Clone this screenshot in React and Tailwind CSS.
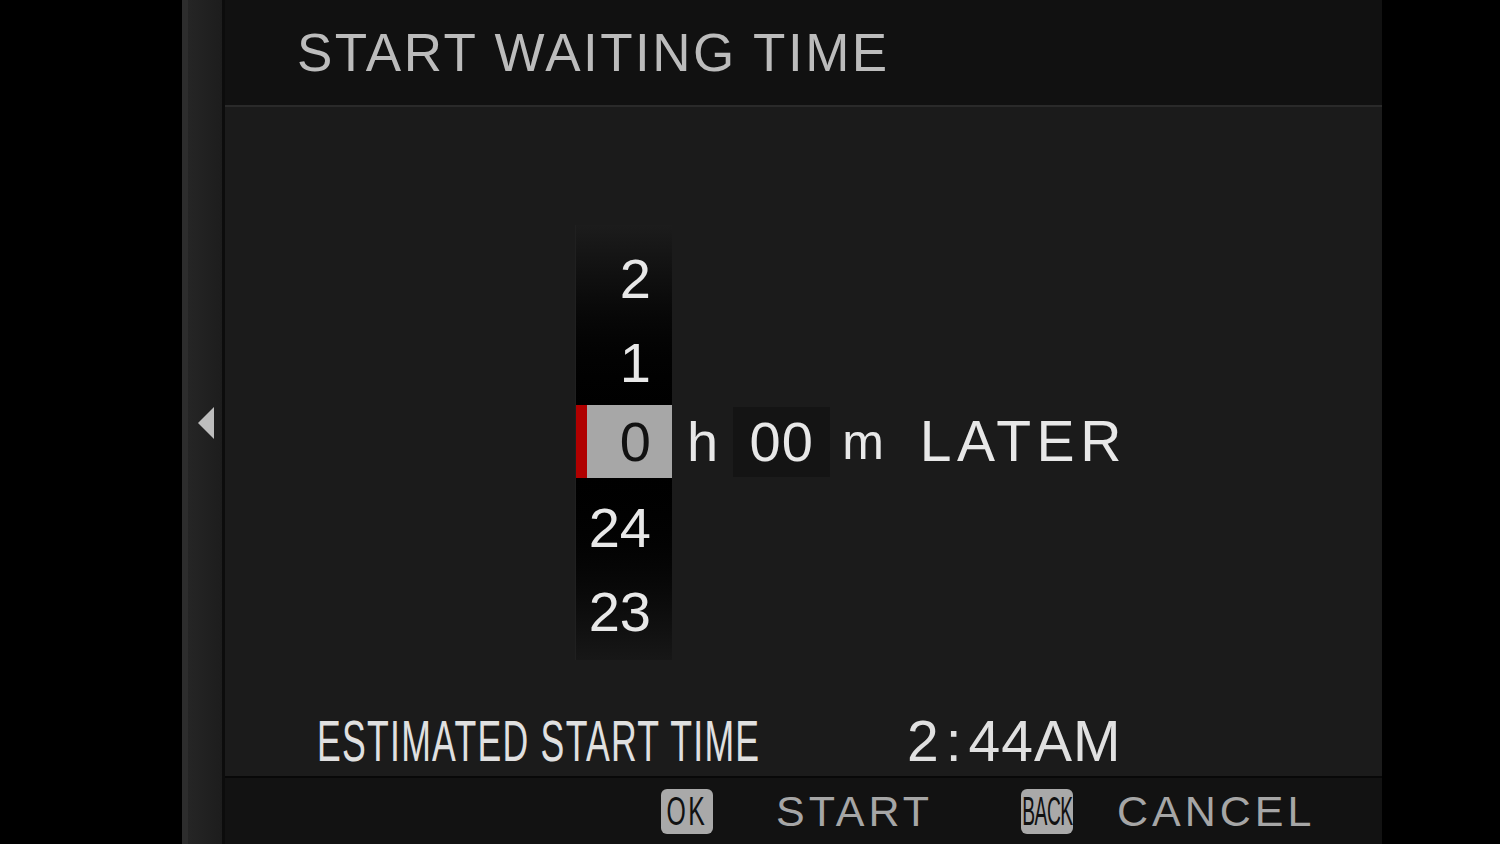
import React from "react";

const font = "font-['Liberation_Sans',Arial,sans-serif]";

// hour drum values, top to bottom
const above = ["2", "1"];
const below = ["24", "23"];

function DrumCell({ value }) {
  return (
    <div className="h-[84px] flex items-center justify-end pr-[21px] text-[56px] leading-none text-[#e8e8e8]">
      {value}
    </div>
  );
}

function Badge({ label, scale }) {
  return (
    <div className="w-[52px] h-[45px] rounded-[6px] bg-[#a9a9a9] flex items-center justify-center overflow-hidden">
      <span className={`inline-block text-[40px] leading-none text-[#111] ${scale}`}>{label}</span>
    </div>
  );
}

export default function App() {
  return (
    <div className={`flex w-full h-[844px] overflow-hidden bg-black ${font}`}>
      <div className="w-[182px] shrink-0 bg-black" />

      {/* left side strip with arrow */}
      <div className="w-[6px] shrink-0 bg-[#2d2d2d]" />
      <div className="w-[34px] shrink-0 bg-linear-to-r from-[#252525] to-[#1d1d1d] flex items-center pl-[10px]">
        <svg width="16" height="32" viewBox="0 0 16 32" className="mt-[2px]">
          <polygon points="16,0 16,32 0,16" fill="#bdbdbd" />
        </svg>
      </div>
      <div className="w-[3px] shrink-0 bg-[#0c0c0c]" />

      {/* main panel */}
      <div className="w-[1157px] shrink-0 flex flex-col">
        <div className="h-[105px] bg-[#111] flex items-center pl-[72px]">
          <span className="text-[53px] leading-none tracking-[2.5px] text-[#bcbcbc] whitespace-nowrap">START WAITING TIME</span>
        </div>
        <div className="h-[2px] bg-[#2a2a2a]" />

        <div className="flex-1 bg-[#1b1b1b] flex flex-col">
          <div className="flex items-start pl-[350px] mt-[118px]">
            {/* hour drum */}
            <div className="w-[97px] flex flex-col pt-[12px] pb-[6px] border-l border-[#202020] bg-linear-to-b from-[#1c1c1c] via-black to-[#171717]">
              {above.map((v) => (
                <DrumCell key={v} value={v} />
              ))}
              <div className="h-[73px] flex">
                <div className="w-[11px] bg-[#b00000]" />
                <div className="flex-1 bg-[#a7a7a7] flex items-center justify-end pr-[21px] text-[56px] leading-none text-[#111]">
                  0
                </div>
              </div>
              <div className="mt-[8px]">
                {below.map((v) => (
                  <DrumCell key={v} value={v} />
                ))}
              </div>
            </div>

            <div className="pt-[180px] flex items-center h-[253px] text-[56px] leading-none text-[#e8e8e8]">
              <span className="ml-[15px]">h</span>
              <div className="ml-[15px] w-[97px] h-[70px] bg-[#141414] flex items-center justify-center tracking-[1px]">
                00
              </div>
              <span className="ml-[12px] text-[50px]">m</span>
              <span className="ml-[36px] text-[57px] tracking-[5.5px]">LATER</span>
            </div>
          </div>

          <div className="mt-auto pb-[6px] pl-[92px] flex items-center text-[57px] leading-none text-[#e0e0e0] whitespace-nowrap">
            <div className="w-[590px] shrink-0">
              <span className="inline-block origin-left scale-x-[0.625] tracking-[2px]">ESTIMATED START TIME</span>
            </div>
            <span className="tracking-[1px]">
              2<span className="mx-[6px]">:</span>44AM
            </span>
          </div>
        </div>

        <div className="h-[2px] bg-[#080808]" />
        <div className="h-[66px] bg-[#121212] flex items-center pl-[436px] text-[43px] leading-none tracking-[4px] text-[#a6a6a6] whitespace-nowrap">
          <Badge label="OK" scale="scale-x-[0.62]" />
          <span className="ml-[63px]">START</span>
          <div className="ml-[88px]">
            <Badge label="BACK" scale="scale-x-[0.48] tracking-[-1px]" />
          </div>
          <span className="ml-[44px]">CANCEL</span>
        </div>
      </div>

      <div className="flex-1 bg-black" />
    </div>
  );
}
